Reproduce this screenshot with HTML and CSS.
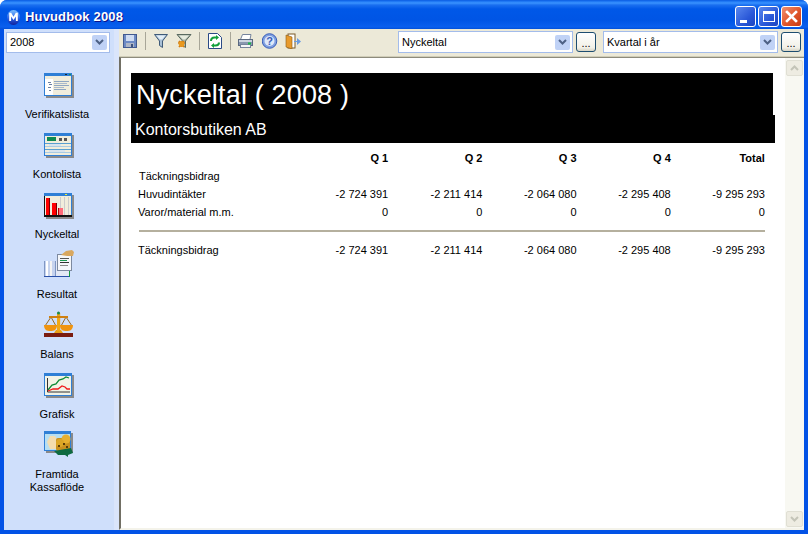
FILE: index.html
```html
<!DOCTYPE html>
<html lang="sv">
<head>
<meta charset="utf-8">
<title>Huvudbok 2008</title>
<link rel="stylesheet" href="styles.css">
</head>
<body>
<div class="window">
  <header class="titlebar">
    <svg class="app-icon" width="13" height="15" viewBox="0 0 13 15"><defs><linearGradient id="ball" x1="0" y1="0" x2="0" y2="1"><stop offset="0" stop-color="#7cc0ff"/><stop offset=".55" stop-color="#2a62e8"/><stop offset="1" stop-color="#10209a"/></linearGradient></defs><ellipse cx="6.500" cy="7.500" rx="6.500" ry="7.500" fill="url(#ball)"/><path d="M2.200 11V2.800h2L6.500 6.800l2.300-4h2V11H8.900V6.500L6.500 10 4.100 6.500V11z" fill="#fff"/></svg>
    <span class="title-text">Huvudbok 2008</span>
    <div class="win-buttons">
      <button class="win-btn"><span class="glyph-min"></span></button>
      <button class="win-btn"><span class="glyph-max"></span></button>
      <button class="win-btn win-close"><svg width="13" height="13" viewBox="0 0 13 13"><path d="M2 2l9 9M11 2l-9 9" stroke="#fff" stroke-width="2.600" stroke-linecap="square"/></svg></button>
    </div>
  </header>
  <div class="body-row">
    <aside class="sidebar">
      <div class="combo combo-side"><span class="combo-text">2008</span><span class="combo-arrow"><svg width="9" height="7" viewBox="0 0 9 7"><path d="M1 1l3.500 3.500L8 1" fill="none" stroke="#4d6185" stroke-width="2"/></svg></span></div>
      <nav class="nav">
        <div class="nav-item">
          <svg class="nav-icon" width="30" height="26" viewBox="0 0 30 26" shape-rendering="crispEdges"><rect x="2" y="2" width="28" height="23" fill="#8a8a8a"/><rect x="0" y="0" width="28" height="23" fill="#2f7fd6"/><rect x="1" y="3" width="26" height="19" fill="#f1eddc"/><rect x="1" y="6" width="8" height="16" fill="#fff"/><rect x="4" y="9" width="3" height="1" fill="#6b7fa0"/><rect x="5" y="11" width="3" height="1" fill="#6b7fa0"/><rect x="4" y="14" width="3" height="1" fill="#6b7fa0"/><rect x="5" y="17" width="2" height="1" fill="#6b7fa0"/><rect x="10" y="8" width="15" height="1" fill="#8fa6c2"/><rect x="10" y="10" width="13" height="1" fill="#aab9cc"/><rect x="10" y="12" width="15" height="1" fill="#8fa6c2"/><rect x="10" y="14" width="10" height="1" fill="#aab9cc"/><rect x="10" y="16" width="12" height="1" fill="#8fa6c2"/><rect x="21" y="1" width="2" height="1" fill="#123"/><rect x="25" y="1" width="2" height="1" fill="#1a9a50"/></svg>
          <span class="nav-label">Verifikatslista</span>
        </div>
        <div class="nav-item">
          <svg class="nav-icon" width="30" height="26" viewBox="0 0 30 26" shape-rendering="crispEdges"><rect x="2" y="2" width="28" height="23" fill="#8a8a8a"/><rect x="0" y="0" width="28" height="23" fill="#2f7fd6"/><rect x="1" y="3" width="26" height="19" fill="#f1eddc"/><rect x="3" y="4" width="9" height="4" fill="#0f8a50"/><rect x="15" y="5" width="3" height="3" fill="#555"/><rect x="20" y="5" width="3" height="3" fill="#555"/><rect x="1" y="10" width="26" height="1" fill="#5aa0d0"/><rect x="1" y="13" width="26" height="1" fill="#a9cbe4"/><rect x="1" y="16" width="26" height="1" fill="#5aa0d0"/><rect x="1" y="19" width="26" height="1" fill="#a9cbe4"/><rect x="5" y="11" width="12" height="2" fill="#d8e4ee"/><rect x="5" y="17" width="16" height="2" fill="#d8e4ee"/></svg>
          <span class="nav-label">Kontolista</span>
        </div>
        <div class="nav-item">
          <svg class="nav-icon" width="30" height="26" viewBox="0 0 30 26" shape-rendering="crispEdges"><rect x="2" y="2" width="28" height="24" fill="#8a8a8a"/><rect x="0" y="0" width="28" height="24" fill="#2f7fd6"/><rect x="1" y="3" width="26" height="20" fill="#f1eddc"/><rect x="0" y="3" width="1" height="21" fill="#111"/><rect x="16" y="4" width="1" height="18" fill="#ccc"/><rect x="20" y="4" width="1" height="18" fill="#ccc"/><rect x="24" y="4" width="1" height="18" fill="#ccc"/><rect x="2" y="5" width="4" height="17" fill="#f00"/><rect x="5" y="5" width="1" height="17" fill="#700"/><rect x="8" y="10" width="5" height="12" fill="#f00"/><rect x="12" y="10" width="1" height="12" fill="#700"/><rect x="14" y="15" width="5" height="7" fill="#ff6a78"/><rect x="14" y="15" width="1" height="7" fill="#b00"/><rect x="0" y="22" width="28" height="2" fill="#111"/><rect x="21" y="1" width="2" height="1" fill="#ee3"/></svg>
          <span class="nav-label">Nyckeltal</span>
        </div>
        <div class="nav-item">
          <svg class="nav-icon" width="30" height="26" viewBox="0 0 30 26" shape-rendering="crispEdges"><rect x="0" y="8" width="25" height="16" fill="#e4e9f5"/><rect x="0" y="8" width="12" height="15" fill="#c6d3ee"/><rect x="2" y="8" width="2" height="15" fill="#fff"/><rect x="6" y="8" width="2" height="15" fill="#f4f4f4"/><rect x="0" y="8" width="1" height="15" fill="#7f97c4"/><rect x="11" y="8" width="1" height="15" fill="#7f97c4"/><rect x="0" y="23" width="25" height="1" fill="#2a50a8"/><rect x="25" y="17" width="1" height="7" fill="#159a40"/><rect x="13" y="1" width="15" height="17" fill="#7d8aa0"/><rect x="14" y="2" width="13" height="15" fill="#f5f7fa"/><rect x="16" y="5" width="9" height="1" fill="#555"/><rect x="16" y="7" width="7" height="1" fill="#1a9a50"/><rect x="16" y="9" width="9" height="1" fill="#333"/><rect x="16" y="12" width="8" height="1" fill="#8a8a8a"/><path d="M17 2l5-4 6-1 2 2-1 4-6 0z" fill="#d9a860" shape-rendering="auto"/></svg>
          <span class="nav-label">Resultat</span>
        </div>
        <div class="nav-item">
          <svg class="nav-icon" width="30" height="26" viewBox="0 0 30 26"><path d="M7 4L1 13M7 4l5 9M22 4l-5 9M22 4l6 9" stroke="#8a5a10" stroke-width=".9" fill="none"/><rect x="0" y="20" width="29" height="4" fill="#7a1c10"/><path d="M10 20l2-3h5l2 3z" fill="#e8a018"/><rect x="13" y="0" width="3.200" height="18" fill="#f0a818"/><rect x="5" y="3" width="19" height="2" fill="#d08010"/><path d="M0 12h13c0 5-3 6-6.500 6S0 17 0 12zM16 12h13c0 5-3 6-6.500 6S16 17 16 12z" fill="#f09410"/><circle cx="14.500" cy="0" r="1.500" fill="#1a8a50"/></svg>
          <span class="nav-label">Balans</span>
        </div>
        <div class="nav-item">
          <svg class="nav-icon" width="30" height="26" viewBox="0 0 30 26"><rect x="2" y="2" width="28" height="23" fill="#8a8a8a"/><rect x="0" y="0" width="28" height="23" fill="#2f7fd6"/><rect x="1" y="3" width="26" height="19" fill="#f2f3e6"/><path d="M3.500 5v14H26" fill="none" stroke="#333" stroke-width="1"/><path d="M4 17l4-5 4-1 3-4 4-1 3-2 3 1" fill="none" stroke="#0b8a34" stroke-width="1.300"/><path d="M4 18l5-2 5 0 4-3 3 1 2 2h3" fill="none" stroke="#f01818" stroke-width="1.300"/></svg>
          <span class="nav-label">Grafisk</span>
        </div>
        <div class="nav-item">
          <svg class="nav-icon" width="30" height="26" viewBox="0 0 30 26"><rect x="2" y="0" width="27" height="20" fill="#8a8a8a"/><rect x="0" y="-2" width="27" height="20" fill="#2f7fd6"/><rect x="1" y="1" width="25" height="16" fill="#b6def2"/><path d="M3 9l3-6 5 0 3 5-2 8-6 0z" fill="#f4dcae"/><rect x="12" y="5" width="14" height="13" rx="2" fill="#c8901e"/><circle cx="22" cy="6" r="4.500" fill="#e8b030"/><circle cx="16" cy="10" r="4" fill="#dca626"/><rect x="14" y="12" width="2" height="2" fill="#5a3c08"/><rect x="19" y="10" width="2" height="2" fill="#5a3c08"/><rect x="22" y="13" width="2" height="2" fill="#5a3c08"/><path d="M10 18l17-3 2 5-5 2 0 2-3-2-7 0z" fill="#0e6a40"/></svg>
          <span class="nav-label">Framtida<br>Kassaflöde</span>
        </div>
      </nav>
    </aside>
    <div class="gutter"></div>
    <main class="main">
      <div class="toolbar">
        <svg class="tool" width="16" height="16" viewBox="1 0 16 16" shape-rendering="crispEdges"><rect x="1" y="1" width="14" height="14" fill="#41598f"/><rect x="2" y="2" width="12" height="12" fill="#6d8ac4"/><rect x="4" y="2" width="8" height="6" fill="#cfdcf2"/><rect x="4" y="10" width="8" height="4" fill="#aeb6c6"/><rect x="9" y="11" width="2" height="3" fill="#3d527f"/></svg>
        <span class="sep sep-a"></span>
        <svg class="tool tool-f1" width="16" height="16" viewBox="1 0 16 16"><path d="M1.500 1.500h13L9.500 8v6.500l-3-2V8z" fill="#a9c0d6" stroke="#3f5a78"/><path d="M3.500 2.500h9L9 6.500H7z" fill="#e4eef6"/></svg>
        <svg class="tool tool-f2" width="16" height="16" viewBox="0 0 16 16"><path d="M1 1.500h14L9.500 8v6.500l-3-2V8z" fill="#a9b4a8" stroke="#5a6a60"/><path d="M3 2.500h10L9 6.500H7z" fill="#e8ecdf"/><path d="M2 10h7M5.500 8v6M3 8l5 6M8 8l-5 6" stroke="#d07c14" stroke-width="1.700"/><circle cx="5.500" cy="11" r="2.800" fill="#e8981e"/></svg>
        <span class="sep sep-b"></span>
        <svg class="tool tool-r" width="16" height="16" viewBox="1 0 16 16"><path d="M1.500 .5h9l4 4v11h-13z" fill="#fff" stroke="#2b4a86"/><path d="M4 8c0-2 1-3.500 3.500-3.500H10M12 9.500c0 2-1 3-3.500 3H6" fill="none" stroke="#12a03c" stroke-width="2"/><path d="M9 2l3 2.500L9 7zM7 10l-3 2.500L7 15z" fill="#12a03c"/></svg>
        <span class="sep sep-c"></span>
        <svg class="tool tool-p" width="16" height="16" viewBox="0 0 16 16"><path d="M4.500 1.500h8.500l-1 5H2.500z" fill="#fff" stroke="#76849c"/><rect x=".5" y="6.500" width="14" height="6" fill="#8a98b0" stroke="#5a6880"/><rect x="1" y="7" width="13" height="2" fill="#ccd4e0"/><rect x="2.500" y="11.500" width="10" height="3" fill="#f4f5f7" stroke="#76849c"/><rect x="10" y="9.500" width="3" height="2" fill="#18b848"/></svg>
        <svg class="tool tool-h" width="16" height="16" viewBox="0.500 0 16 16"><circle cx="8" cy="8" r="7.300" fill="#7f9fe0" stroke="#3a5eb8"/><circle cx="8" cy="8" r="5" fill="#dfe8fa"/><text class="help-q" x="8" y="11.500" text-anchor="middle">?</text></svg>
        <svg class="tool tool-e" width="17" height="16" viewBox="0 0 17 16"><rect x="3" y="1" width="7" height="14" fill="#fff" stroke="#7b5a28"/><path d="M1 2l6 2v12l-6-2z" fill="#e89a2c" stroke="#8a5a14" stroke-width=".6"/><path d="M9 8h3V5l4 3.500-4 3.500V9H9z" fill="#6b9be0"/></svg>
        <div class="combo combo-a"><span class="combo-text">Nyckeltal</span><span class="combo-arrow"><svg width="9" height="7" viewBox="0 0 9 7"><path d="M1 1l3.500 3.500L8 1" fill="none" stroke="#4d6185" stroke-width="2"/></svg></span></div>
        <button class="dots">...</button>
        <div class="combo combo-b"><span class="combo-text">Kvartal i år</span><span class="combo-arrow"><svg width="9" height="7" viewBox="0 0 9 7"><path d="M1 1l3.500 3.500L8 1" fill="none" stroke="#4d6185" stroke-width="2"/></svg></span></div>
        <button class="dots">...</button>
      </div>
      <div class="content">
        <div class="report">
          <div class="banner-top"><h1 class="banner-title">Nyckeltal ( 2008 )</h1></div>
          <div class="banner-bottom"><span class="banner-sub">Kontorsbutiken AB</span></div>
          <div class="table">
            <div class="row row-head"><span></span><span>Q 1</span><span>Q 2</span><span>Q 3</span><span>Q 4</span><span>Total</span></div>
            <div class="row"><span class="indent">Täckningsbidrag</span></div>
            <div class="row"><span>Huvudintäkter</span><span>-2 724 391</span><span>-2 211 414</span><span>-2 064 080</span><span>-2 295 408</span><span>-9 295 293</span></div>
            <div class="row"><span>Varor/material m.m.</span><span>0</span><span>0</span><span>0</span><span>0</span><span>0</span></div>
            <div class="rule"></div>
            <div class="row"><span>Täckningsbidrag</span><span>-2 724 391</span><span>-2 211 414</span><span>-2 064 080</span><span>-2 295 408</span><span>-9 295 293</span></div>
          </div>
        </div>
        <div class="scrollbar">
          <div class="sb-btn"><svg width="9" height="6" viewBox="0 0 9 6"><path d="M1 5l3.500-3.500L8 5" fill="none" stroke="#c4c4b8" stroke-width="2"/></svg></div>
          <div class="sb-btn"><svg width="9" height="6" viewBox="0 0 9 6"><path d="M1 1l3.500 3.500L8 1" fill="none" stroke="#c4c4b8" stroke-width="2"/></svg></div>
        </div>
      </div>
    </main>
  </div>
</div>
</body>
</html>
```
FILE: styles.css
```css
* { box-sizing: border-box; }
html, body { margin: 0; padding: 0; }
body { width: 808px; height: 534px; overflow: hidden; font-family: "Liberation Sans", Arial, sans-serif; font-size: 11px; color: #000; }

.window { width: 808px; height: 534px; display: flex; flex-direction: column; background: #0252e6; border-radius: 7px 7px 0 0; overflow: hidden; }

.titlebar { height: 29px; flex: none; display: flex; align-items: center; padding: 0 6px 0 7px;
  background: linear-gradient(#0a5ae0 0, #1870f0 1px, #3a93ff 3px, #1a6ff0 5px, #0058e8 9px, #0055e5 20px, #0a5fee 27px, #0250d8 29px); }
.app-icon { flex: none; margin-top: 5px; }
.title-text { margin-left: 5px; font-weight: bold; font-size: 13px; letter-spacing: .15px; color: #fff; text-shadow: 1px 1px 0 #0f1089; margin-top: 4px; }
.win-buttons { margin-left: auto; display: flex; gap: 2px; padding-top: 4px; }
.win-btn { width: 21px; height: 21px; padding: 0; border: 1px solid #fff; border-radius: 3px; background: linear-gradient(135deg, #5a88ee, #2a58d8 60%, #1c44c0); display: flex; align-items: center; justify-content: center; }
.win-close { background: linear-gradient(135deg, #f09070, #e0552a 55%, #c83a14); }
.glyph-min { width: 7px; height: 3px; background: #fff; margin: 9px 5px 0 0; }
.glyph-max { width: 12px; height: 11px; border: 1px solid #fff; border-top-width: 3px; }

.body-row { flex: 1; display: flex; min-height: 0; margin: 0 4px 4px; }
.sidebar { width: 110px; flex: none; background: #cfdffb; padding: 3px 0 0 2px; display: flex; flex-direction: column; }
.gutter { width: 5px; flex: none; background: #dae5fb; }

.combo { height: 21px; background: #fff; border: 1px solid #a3bceb; display: flex; align-items: center; justify-content: space-between; padding: 0 2px 0 3px; flex: none; }
.combo-text { font-size: 11px; line-height: 13px; }
.combo-arrow { width: 15px; height: 15px; background: #c0d2f6; border-radius: 2px; display: flex; align-items: center; justify-content: center; }
.combo-side { width: 104px; }
.combo-a { width: 175px; height: 22px; margin: 0 0 1px 96px; }
.combo-b { width: 175px; height: 22px; margin: 0 0 1px 7px; }
.dots { width: 20px; height: 20px; padding: 0; margin: 0 0 1px 3px; flex: none; border: 1px solid #1d4d70; border-radius: 3px; background: linear-gradient(#fff, #f2f1e8 80%, #d8d5c5); font: 11px "Liberation Sans", Arial, sans-serif; line-height: 20px; }

.nav { display: flex; flex-direction: column; margin-top: 20px; padding-right: 6px; }
.nav-item { height: 60px; display: flex; flex-direction: column; align-items: center; }
.nav-icon { flex: none; display: block; margin-left: 4px; overflow: visible; }
.nav-label { margin-top: 9px; font-size: 11px; line-height: 13px; text-align: center; }

.main { flex: 1; min-width: 0; display: flex; flex-direction: column; }
.toolbar { height: 28px; flex: none; background: #ece9d8; display: flex; align-items: center; padding: 0 3px 0 4px; border-bottom: 1px solid #d0cdb8; }
.tool { flex: none; margin-bottom: 4px; }
.sep { width: 1px; height: 18px; background: #a8a698; flex: none; margin-bottom: 3px; }
.sep-a { margin-left: 6px; }
.tool-f1 { margin-left: 8px; }
.tool-f2 { margin-left: 6px; }
.sep-b { margin-left: 7px; }
.tool-r { margin-left: 8px; }
.sep-c { margin-left: 6px; }
.tool-p { margin-left: 7px; }
.tool-h { margin-left: 8px; }
.tool-e { margin-left: 7px; }
.help-q { font: bold 11px "Liberation Sans", Arial, sans-serif; fill: #3a5eb8; }

.content { flex: 1; min-height: 0; display: flex; background: #fff; border-top: 1px solid #8d8b7c; border-left: 2px solid #716f64; border-bottom: 2px solid #f4f3ea; }
.report { flex: 1; min-width: 0; padding: 15px 0 0 10px; }
.banner-top { width: 642px; height: 42px; background: #000; padding: 7px 0 0 5px; }
.banner-title { margin: 0; font-weight: normal; font-size: 27px; letter-spacing: .17px; line-height: 31px; color: #fff; }
.banner-bottom { width: 644px; height: 28px; background: #000; padding: 6px 0 0 4px; }
.banner-sub { font-size: 16px; line-height: 18px; color: #fff; display: block; }

.table { width: 627px; margin-top: 6px; margin-left: 7px; }
.row { height: 18px; display: grid; grid-template-columns: 156px repeat(5, 94.2px); align-items: center; }
.row > span:not(:first-child) { text-align: right; }
.row-head { font-weight: bold; }
.indent { padding-left: 1px; white-space: nowrap; }
.rule { height: 2px; background: #b5b09e; margin: 9px 0 9px 1px; }

.scrollbar { width: 19px; flex: none; background: #f8f8f2; display: flex; flex-direction: column; justify-content: space-between; padding: 2px 1px 1px; }
.sb-btn { height: 16px; background: #eeece2; border: 1px solid #e0dfd4; border-radius: 2px; display: flex; align-items: center; justify-content: center; }
```
